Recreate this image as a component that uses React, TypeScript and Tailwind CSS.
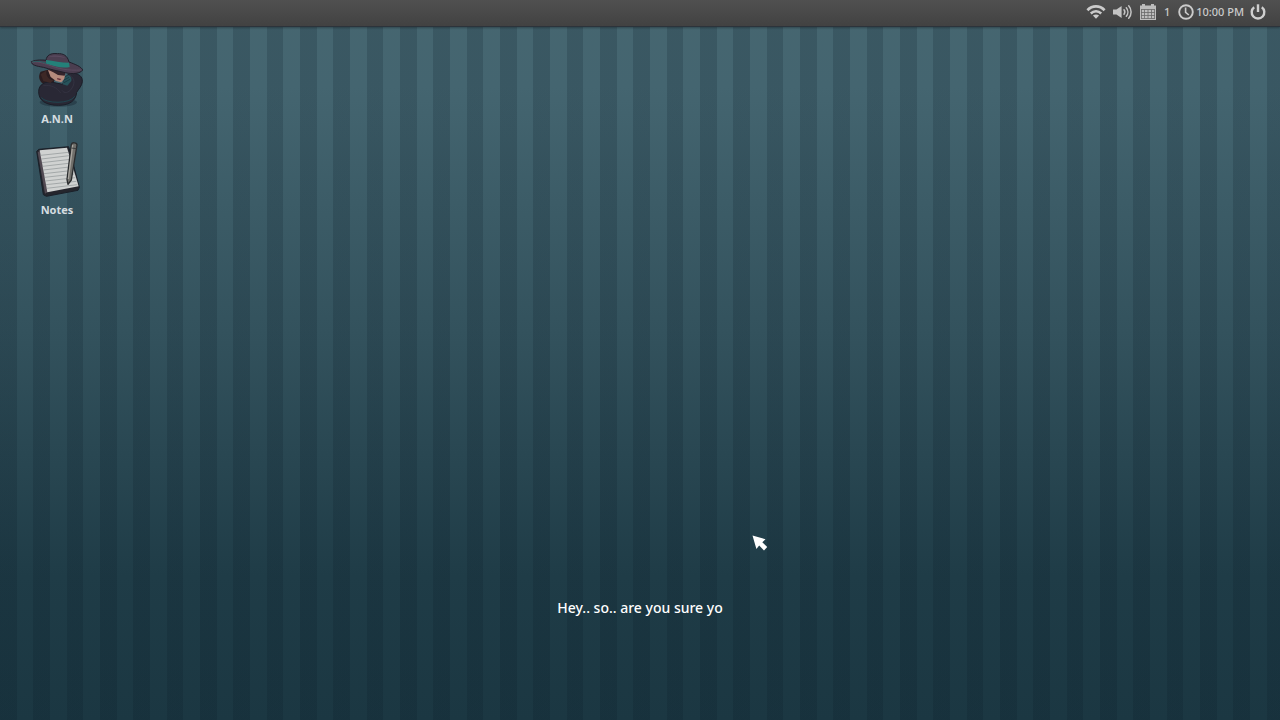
import React from 'react';

function WifiIcon() {
  return (
    <svg viewBox="0 0 20 16" className="h-4 w-5" fill="none" stroke="#cbcbcb">
      <path d="M1.4 6.2C6.3 1.2 13.7 1.2 18.6 6.2" strokeWidth="2.7" />
      <path d="M4.8 9.5C7.8 6.6 12.2 6.6 15.2 9.5" strokeWidth="2.5" />
      <path d="M10 14.8L6.9 11.6C8.7 10 11.3 10 13.1 11.6Z" fill="#cbcbcb" stroke="none" />
    </svg>
  );
}

function VolumeIcon() {
  return (
    <svg viewBox="0 0 20 16" className="h-4 w-5" fill="none" stroke="#c4c4c4" strokeWidth="1.5" strokeLinecap="round">
      <path d="M0 5.6H3.4L8.6 2V14L3.4 10.4H0Z" fill="#c4c4c4" stroke="none" />
      <path d="M11 5.8C12 7.1 12 8.9 11 10.2" />
      <path d="M13.3 3.7C15.4 6.2 15.4 9.8 13.3 12.3" />
      <path d="M15.7 1.8C18.9 5.4 18.9 10.6 15.7 14.2" />
    </svg>
  );
}

function CalendarIcon() {
  return (
    <svg viewBox="0 0 16 16" className="size-4">
      <path d="M0 1.5H2V0H5V1.5H11V0H14V1.5H16V16H0Z" fill="#bdbdbd" />
      <path
        d="M1 5.5H15M1 8.5H15M1 11.5H15M1 14.5H15M1.5 5.5V14.5M4.5 5.5V14.5M8 5.5V14.5M11.5 5.5V14.5M14.5 5.5V14.5"
        stroke="#686868"
        strokeWidth="0.8"
      />
    </svg>
  );
}

function ClockIcon() {
  return (
    <svg viewBox="0 0 16 16" className="size-4" fill="none" stroke="#cbcbcb">
      <circle cx="8" cy="8" r="6.8" strokeWidth="1.9" />
      <path d="M7.6 3.5V8.3L10.8 11" strokeWidth="1.6" />
    </svg>
  );
}

function PowerIcon() {
  return (
    <svg viewBox="0 0 16 16" className="size-4" fill="none" stroke="#cfcfcf" strokeWidth="2.4">
      <path d="M4.2 3.2A6.3 6.3 0 1 0 11.8 3.2" />
      <path d="M8 0.3V8" />
    </svg>
  );
}

function DetectiveIcon() {
  return (
    <svg viewBox="27 18 168 168" className="size-14">
      <ellipse cx="115" cy="172" rx="56" ry="13" fill="#1c2c38" opacity="0.5" />
      <path d="M62 80C54 92 56 108 70 116L98 122L108 92L92 72Z" fill="#2b1d20" />
      <path d="M56 140C56 118 76 108 98 112L128 118C136 96 142 84 158 84C176 86 188 94 187 110C186 122 176 132 170 142C168 166 150 181 116 181C76 181 56 166 56 140Z" fill="#292835" stroke="#1b1e28" strokeWidth="3" />
      <path d="M84 76L98 72L136 82L134 100L124 112L108 108L92 96Z" fill="#b58a7c" />
      <path d="M84 74L100 82L114 90L134 92L137 80L106 70Z" fill="#34242b" />
      <path d="M112 99L124 102L120 106L111 103Z" fill="#68323b" />
      <path d="M80 76C76 92 84 102 100 106L92 114L70 108L62 88Z" fill="#3d2826" />
      <path d="M136 92C148 88 156 94 154 108L142 122L128 118Z" fill="#27525a" />
      <path d="M134 96L143 91M132 105L147 97M132 113L150 103" stroke="#183139" strokeWidth="2" />
      <path d="M150 92C164 100 166 116 154 132C146 144 132 146 126 136" fill="none" stroke="#343342" strokeWidth="3" />
      <path d="M70 122C92 118 112 128 122 144" fill="none" stroke="#32313f" strokeWidth="3" />
      <path d="M64 158C78 176 150 178 164 154" fill="none" stroke="#1f4650" strokeWidth="3" />
      <path d="M34 50C50 43 68 45 78 46C80 30 92 24 112 26C130 25 142 31 147 51C166 58 184 65 188 75C181 86 158 88 136 83C108 77 92 73 70 67C48 63 34 60 34 50Z" fill="#4b3e50" stroke="#201f2a" strokeWidth="3" />
      <path d="M86 36C96 29 124 30 138 39C118 35 100 35 86 36Z" fill="#5b4b60" />
      <path d="M78 45C100 48 124 53 147 53L149 66C126 72 100 62 78 56Z" fill="#248079" />
      <path d="M35 52C51 48 69 54 86 60C112 70 142 78 185 75" fill="none" stroke="#5c4b60" strokeWidth="3" />
      <path d="M37 51C49 47 64 49 79 55" fill="none" stroke="#2b5f63" strokeWidth="3" />
    </svg>
  );
}

function NotesIcon() {
  return (
    <svg viewBox="27 21 168 168" className="size-14">
      <path d="M50 49L56 43L146 35L178 157L174 166L79 184L70 179Z" fill="#25262d" stroke="#1a2029" strokeWidth="3" strokeLinejoin="round" />
      <path d="M53 52L60 48L82 172L75 176Z" fill="#514952" />
      <path d="M59 46L141 38L176 154L82 172Z" fill="#d0d2d1" />
      <path
        d="M62 61L145 52M64 72L148 62M66 83L151 73M68 94L154 84M70 105L157 95M72 116L160 106M74 127L163 117M76 138L166 128M78 149L169 139M80 160L172 149"
        stroke="#8d9294"
        strokeWidth="2"
      />
      <path d="M144 148L141 134L154 28C156 21 171 22 171 30L154 135Z" fill="#706f6b" stroke="#2a2c2e" strokeWidth="4" strokeLinejoin="round" />
      <path d="M158 30L145 132" stroke="#a8a6a0" strokeWidth="4" />
      <path d="M154 39L169 41" stroke="#3d3e3f" strokeWidth="3" />
    </svg>
  );
}

const shortcuts = [
  { name: 'A.N.N', icon: <DetectiveIcon /> },
  { name: 'Notes', icon: <NotesIcon /> },
];

function TopBar() {
  return (
    <header className="flex h-[27px] items-center justify-end border-b border-[#2c333b] bg-linear-to-b from-[#505050] to-[#424242] pr-[14px] pb-[2px] text-[11px] font-medium text-[#cbcbcb] shadow-[0_1px_2px_rgba(0,0,0,0.3)]">
      <button aria-label="Wi-Fi">
        <WifiIcon />
      </button>
      <button aria-label="Volume" className="ml-[7px]">
        <VolumeIcon />
      </button>
      <button className="ml-[7px] flex items-center gap-2">
        <CalendarIcon />
        <span>1</span>
      </button>
      <button className="ml-2 flex items-center gap-[2px]">
        <ClockIcon />
        <span>10:00 PM</span>
      </button>
      <button aria-label="Power" className="ml-[6px]">
        <PowerIcon />
      </button>
    </header>
  );
}

export default function App() {
  return (
    <div className="relative flex min-h-screen flex-col bg-[repeating-linear-gradient(90deg,rgba(8,24,36,0.18)_0_17px,transparent_17px_33px,rgba(8,24,36,0.18)_33px_50px,transparent_50px_67px,rgba(8,24,36,0.18)_67px_83px,transparent_83px_100px),linear-gradient(180deg,#466670_0%,#446570_12%,#33525d_46%,#1f3c47_80%,#1b3742_100%)] font-['Noto_Sans','Open_Sans',sans-serif]">
      <TopBar />
      <main className="flex flex-1 flex-col justify-between">
        <nav className="flex flex-col items-start gap-[15px] pt-6 pl-[29px]">
          {shortcuts.map((shortcut) => (
            <button key={shortcut.name} className="flex flex-col items-center gap-1">
              {shortcut.icon}
              <span className="text-[11px] leading-4 font-bold text-[#d5dde0]">{shortcut.name}</span>
            </button>
          ))}
        </nav>
        <p className="pb-[100px] text-center text-sm leading-6 font-medium text-white">Hey.. so.. are you sure yo</p>
      </main>
      <svg viewBox="0 0 16 16" className="pointer-events-none absolute top-[535px] left-[752px] size-4">
        <path d="M0.5 0.5L13.5 4.3L10.3 7.3L15.2 12L12 15.4L7.2 10.6L4.4 14Z" fill="#fff" />
      </svg>
    </div>
  );
}
